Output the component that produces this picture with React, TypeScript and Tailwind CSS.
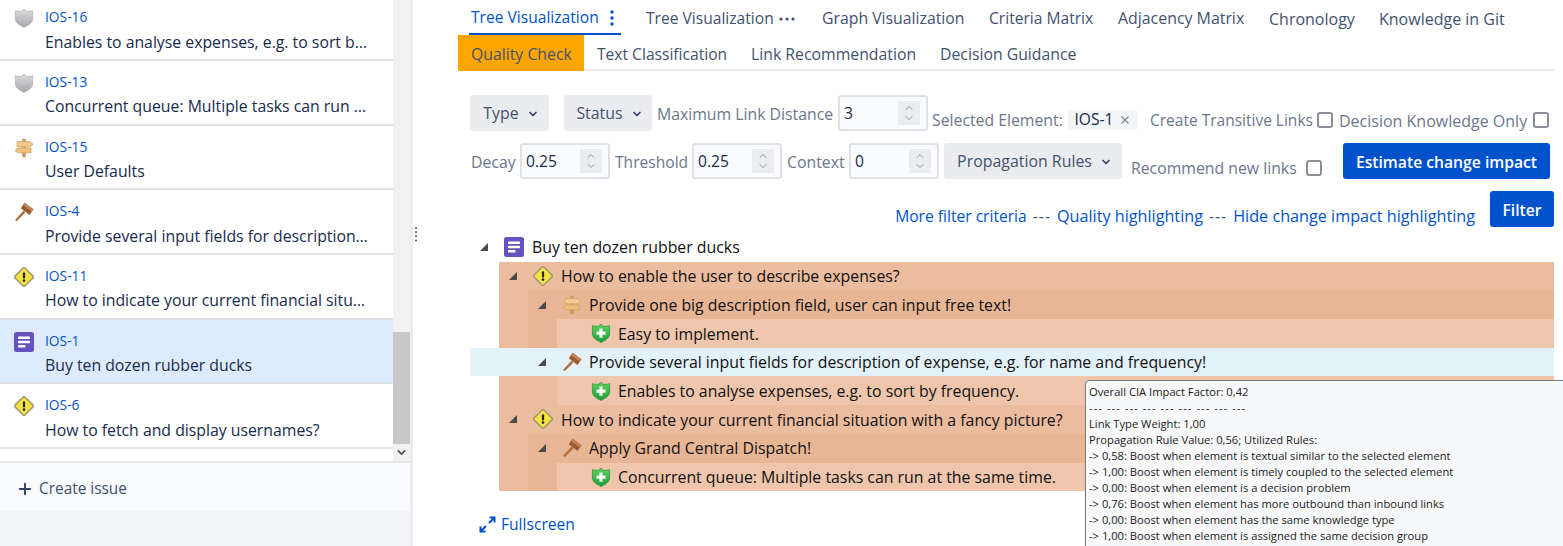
import { ChevronDown, ChevronUp, Plus, X } from "lucide-react";
import type { ReactNode } from "react";

type IconKind = "story" | "warning" | "shieldGray" | "shieldGreen" | "sign" | "gavel";

function StoryIcon() {
  return (
    <svg width="20" height="20" viewBox="0 0 20 20">
      <rect width="20" height="20" rx="2.5" fill="#6554c0" />
      <rect x="4" y="4.5" width="12" height="2.5" rx="0.8" fill="#fff" />
      <rect x="4" y="8.8" width="12" height="2.5" rx="0.8" fill="#fff" />
      <rect x="4" y="13" width="7.5" height="2.5" rx="0.8" fill="#fff" />
    </svg>
  );
}

function WarningIcon() {
  return (
    <svg width="20" height="20" viewBox="0 0 20 20">
      <rect x="3" y="3" width="14" height="14" rx="1.6" transform="rotate(45 10 10)" fill="#f4e43f" stroke="#a39b78" strokeWidth="1.6" />
      <rect x="8.9" y="5.2" width="2.2" height="6.2" rx="1" fill="#26261c" />
      <circle cx="10" cy="13.6" r="1.3" fill="#26261c" />
    </svg>
  );
}

const shieldPath = "M10 1.2 L12.6 3.4 L16.6 3.2 L18.6 2.6 V11 C18.6 15 14 17.5 10 19.4 C6 17.5 1.4 15 1.4 11 V2.6 L3.4 3.2 L7.4 3.4 Z";

function ShieldIcon({ green }: { green?: boolean }) {
  const id = green ? "shield-green" : "shield-gray";
  return (
    <svg width="20" height="20" viewBox="0 0 20 20">
      <defs>
        <linearGradient id={id} x1="0" y1="0" x2="0" y2="1">
          <stop offset="0" stopColor={green ? "#5fd35f" : "#dcdcde"} />
          <stop offset="1" stopColor={green ? "#1f9a36" : "#a6a7ab"} />
        </linearGradient>
      </defs>
      <path d={shieldPath} fill={`url(#${id})`} stroke={green ? "#2c9a3e" : "#b4b5b9"} strokeWidth="0.8" />
      {green && <path d="M8.4 5.6 h3.2 v3 h3 v3.2 h-3 v3 h-3.2 v-3 h-3 v-3.2 h3 Z" fill="#eefaf0" />}
    </svg>
  );
}

function SignIcon() {
  return (
    <svg width="20" height="20" viewBox="0 0 20 20">
      <rect x="8.2" y="0.8" width="3.6" height="18.4" rx="0.6" fill="#c99a5e" />
      <path d="M3 3.6 H16 L19 6.2 L16 8.8 H3 Z" fill="#f3c98e" stroke="#cf9d5f" strokeWidth="0.7" />
      <path d="M17 10 H4 L1 12.4 L4 14.8 H17 Z" fill="#efbd7c" stroke="#cf9d5f" strokeWidth="0.7" />
    </svg>
  );
}

function GavelIcon() {
  return (
    <svg width="20" height="20" viewBox="0 0 20 20">
      <path d="M1.6 17.2 L9.6 8.6 L11.4 10.4 L3.2 18.8 C2.4 19.4 1 18.2 1.6 17.2 Z" fill="#b06f43" />
      <path d="M10.5 0.8 L19.5 7.2 L15.5 13 L6.8 6.2 Z" fill="#9c5a30" />
      <path d="M10.5 0.8 L19.5 7.2 L17.8 9.4 L9 3 Z" fill="#c5855a" />
    </svg>
  );
}

function NodeIcon({ kind }: { kind: IconKind }) {
  if (kind === "story") return <StoryIcon />;
  if (kind === "warning") return <WarningIcon />;
  if (kind === "shieldGray") return <ShieldIcon />;
  if (kind === "shieldGreen") return <ShieldIcon green />;
  if (kind === "sign") return <SignIcon />;
  return <GavelIcon />;
}

const issues: { id: string; title: string; icon: IconKind; selected?: boolean }[] = [
  { id: "IOS-16", title: "Enables to analyse expenses, e.g. to sort by frequency.", icon: "shieldGray" },
  { id: "IOS-13", title: "Concurrent queue: Multiple tasks can run at the same time.", icon: "shieldGray" },
  { id: "IOS-15", title: "User Defaults", icon: "sign" },
  { id: "IOS-4", title: "Provide several input fields for description of expense.", icon: "gavel" },
  { id: "IOS-11", title: "How to indicate your current financial situation with a picture?", icon: "warning" },
  { id: "IOS-1", title: "Buy ten dozen rubber ducks", icon: "story", selected: true },
  { id: "IOS-6", title: "How to fetch and display usernames?", icon: "warning" },
];

function IssueRow({ id, title, icon, selected }: (typeof issues)[number]) {
  return (
    <div className={`flex h-[64.67px] shrink-0 border-b-2 border-[#dfe1e6] pl-[14px] pt-[12px] ${selected ? "bg-[#deebff]" : "bg-white"}`}>
      <div className="w-[31px] shrink-0">
        <NodeIcon kind={icon} />
      </div>
      <div className="min-w-0 w-[325px]">
        <div className="text-[13.8px] leading-[18px] text-[#0052cc]">{id}</div>
        <div className="mt-[5.3px] truncate text-[15.8px] leading-[20px] text-[#172b4d]">{title}</div>
      </div>
    </div>
  );
}

function Sidebar() {
  return (
    <aside className="flex h-full w-[413px] shrink-0 flex-col border-r-[3px] border-[#ebecf0] bg-[#f4f5f7]">
      <div className="flex h-[461px] shrink-0 overflow-hidden">
        <div className="w-[393px] shrink-0 bg-white">
          <div className="-mt-[3.7px] flex flex-col">
            {issues.map((issue) => (
              <IssueRow key={issue.id} {...issue} />
            ))}
          </div>
        </div>
        <div className="flex w-[17px] shrink-0 flex-col bg-[#f1f1f1] pt-[332px]">
          <div className="h-[112px] bg-[#c8c8c8]" />
          <ChevronDown size={13} strokeWidth={3} className="ml-[2px] mt-[2px] text-[#505050]" />
        </div>
      </div>
      <div className="flex h-[50px] items-center gap-[5px] border-t-2 border-[#e4e6ea] bg-[#fafbfc] pl-[16px] pt-[3px] text-[15.4px] text-[#42526e]">
        <Plus size={18} strokeWidth={2.6} className="text-[#344563]" />
        Create issue
      </div>
    </aside>
  );
}

function TabItem({ children, className, highlight }: { children: ReactNode; className: string; highlight?: boolean }) {
  return (
    <div className={`flex h-[36px] shrink-0 items-center whitespace-nowrap text-[#42526e] ${className} ${highlight ? "bg-[#ffa500]" : ""}`}>
      {children}
    </div>
  );
}

function Tabs() {
  return (
    <div className="border-b-2 border-[#ebecf0]">
      <div className="flex h-[35px]">
        <div className="ml-[11px] flex h-[35px] w-[152px] items-center justify-between border-b-[2.5px] border-[#0052cc] pl-[2px] pr-[7px] pt-[3px] text-[15.6px] text-[#0052cc]">
          Tree Visualization
          <svg width="4" height="16" viewBox="0 0 4 16">
            <circle cx="2" cy="2" r="1.7" fill="#0052cc" />
            <circle cx="2" cy="8" r="1.7" fill="#0052cc" />
            <circle cx="2" cy="14" r="1.7" fill="#0052cc" />
          </svg>
        </div>
        <TabItem className="ml-[25px] w-[176px] pt-[1px] text-[15.6px]">
          Tree Visualization
          <svg width="16" height="4" viewBox="0 0 16 4" className="ml-[5px]">
            <circle cx="2" cy="2" r="1.6" fill="#42526e" />
            <circle cx="8" cy="2" r="1.6" fill="#42526e" />
            <circle cx="14" cy="2" r="1.6" fill="#42526e" />
          </svg>
        </TabItem>
        <TabItem className="w-[167px] pt-[1px] text-[15.8px]">Graph Visualization</TabItem>
        <TabItem className="w-[129px] pt-[1px] text-[15.6px]">Criteria Matrix</TabItem>
        <TabItem className="w-[151px] pt-[1px] text-[15.9px]">Adjacency Matrix</TabItem>
        <TabItem className="w-[110px] pt-[1px] text-[16px]">Chronology</TabItem>
        <TabItem className="w-[127px] pt-[1px] text-[16px]">Knowledge in Git</TabItem>
      </div>
      <div className="flex h-[34px]">
        <TabItem className="w-[126px] pl-[13px] pt-[3px] text-[15.8px]" highlight>Quality Check</TabItem>
        <TabItem className="ml-[13px] w-[154px] pt-[3px] text-[15.6px]">Text Classification</TabItem>
        <TabItem className="w-[189px] pt-[3px] text-[15.8px]">Link Recommendation</TabItem>
        <TabItem className="w-[137px] pt-[3px] text-[15.8px]">Decision Guidance</TabItem>
      </div>
    </div>
  );
}

function Dropdown({ label, className }: { label: string; className: string }) {
  return (
    <div className={`flex h-[36px] items-center justify-center gap-[8px] rounded-[3px] bg-[#ebecf0] pl-[3px] pt-[2px] text-[15.9px] text-[#42526e] ${className}`}>
      {label}
      <ChevronDown size={12} strokeWidth={3.4} className="text-[#344563]" />
    </div>
  );
}

function NumberField({ value }: { value: string }) {
  return (
    <div className="flex h-[36px] w-[90px] items-center justify-between rounded-[3px] border-2 border-[#dfe1e6] bg-[#fafbfc] pl-[4px] pr-[6px]">
      <input readOnly value={value} className="w-[50px] bg-transparent pt-[2px] text-[15.6px] text-[#172b4d] outline-none" />
      <span className="flex h-[24px] w-[22px] flex-col items-center justify-center bg-[#ebecf0] text-[#7a7f8a]">
        <ChevronUp size={12} strokeWidth={1.6} className="-mb-[1px]" />
        <ChevronDown size={12} strokeWidth={1.6} className="-mt-[1px]" />
      </span>
    </div>
  );
}

function Label({ children, className }: { children: ReactNode; className: string }) {
  return <span className={`shrink-0 whitespace-nowrap text-[#6b778c] ${className}`}>{children}</span>;
}

function Box({ className = "" }: { className?: string }) {
  return <span className={`h-[16px] w-[16px] shrink-0 rounded-[3px] border-2 border-[#8b8d99] bg-white ${className}`} />;
}

function Filters() {
  return (
    <div className="pl-[12px]">
      <div className="mt-[24px] flex h-[36px] items-start">
        <Dropdown label="Type" className="w-[79px]" />
        <Dropdown label="Status" className="ml-[15px] w-[88px]" />
        <Label className="ml-[5px] mt-[8px] w-[176px] text-[15.8px]">Maximum Link Distance</Label>
        <div className="ml-[5px]">
          <NumberField value="3" />
        </div>
        <Label className="ml-[4px] mt-[14px] w-[131px] text-[15.8px]">Selected Element:</Label>
        <div className="ml-[5px] mt-[15px] flex h-[20px] w-[70px] items-center justify-center gap-[6px] rounded-[3px] bg-[#f4f5f7] text-[15.6px] text-[#172b4d]">
          IOS-1
          <X size={12} strokeWidth={2.4} className="text-[#7a869a]" />
        </div>
        <Label className="ml-[12px] mt-[14px] w-[163px] text-[15.5px]">Create Transitive Links</Label>
        <Box className="ml-[4px] mt-[17px]" />
        <Label className="ml-[6px] mt-[13.5px] w-[189px] text-[16px]">Decision Knowledge Only</Label>
        <Box className="ml-[5px] mt-[17px]" />
      </div>
      <div className="mt-[12px] flex h-[36px] items-start">
        <Label className="ml-[1px] mt-[8px] w-[44px] text-[15.8px]">Decay</Label>
        <div className="ml-[5px]">
          <NumberField value="0.25" />
        </div>
        <Label className="ml-[5px] mt-[8px] w-[73px] text-[15.6px]">Threshold</Label>
        <div className="ml-[4px]">
          <NumberField value="0.25" />
        </div>
        <Label className="ml-[5px] mt-[8px] w-[58px] text-[15.8px]">Context</Label>
        <div className="ml-[4px]">
          <NumberField value="0" />
        </div>
        <Dropdown label="Propagation Rules" className="ml-[5px] w-[178px]" />
        <Label className="ml-[9px] mt-[14px] w-[166px] text-[15.8px]">Recommend new links</Label>
        <Box className="ml-[9px] mt-[17px]" />
        <button className="ml-[21px] h-[36px] w-[207px] rounded-[3px] bg-[#0052cc] pt-[3px] text-[15.7px] font-semibold text-white">
          Estimate change impact
        </button>
      </div>
      <div className="mt-[12px] flex h-[36px] items-start justify-end">
        <div className="mt-[13px] flex gap-[6px] leading-[24px]">
          <span className="text-[15.6px] text-[#0052cc]">More filter criteria</span>
          <span className="text-[15.8px] tracking-[1px] text-[#42526e]">---</span>
          <span className="text-[16.2px] text-[#0052cc]">Quality highlighting</span>
          <span className="text-[15.8px] tracking-[1px] text-[#42526e]">---</span>
          <span className="text-[16.2px] text-[#0052cc]">Hide change impact highlighting</span>
        </div>
        <button className="ml-[15px] h-[36px] w-[64px] rounded-[3px] bg-[#0052cc] pt-[3px] text-[15.6px] font-semibold text-white">Filter</button>
      </div>
    </div>
  );
}

function Arrow() {
  return (
    <svg width="10" height="10" viewBox="0 0 10 10">
      <path d="M9 1 V9 H1 Z" fill="#4a4a4a" />
    </svg>
  );
}

function TreeRow({ icon, text, leaf, tight }: { icon: IconKind; text: string; leaf?: boolean; tight?: boolean }) {
  return (
    <div className="flex h-[28.7px] items-center text-[15.85px] text-[#111]">
      <span className="flex w-[34px] shrink-0 pl-[9px]">{!leaf && <Arrow />}</span>
      <span className={`flex shrink-0 ${tight ? "w-[27px]" : "w-[28px]"}`}>
        <NodeIcon kind={icon} />
      </span>
      <span className="whitespace-nowrap pt-[2px]">{text}</span>
    </div>
  );
}

function Tree() {
  return (
    <div className="ml-[12px] mt-[6px]">
      <TreeRow icon="story" text="Buy ten dozen rubber ducks" />
      <div className="ml-[29px] bg-[#ecbc9f]">
        <TreeRow icon="warning" text="How to enable the user to describe expenses?" />
        <div className="ml-[29px] bg-[#e9b695]">
          <TreeRow tight icon="sign" text="Provide one big description field, user can input free text!" />
          <div className="ml-[29px] bg-[#efc6ac]">
            <TreeRow tight leaf icon="shieldGreen" text="Easy to implement." />
          </div>
        </div>
        <div className="-ml-[29px] bg-[#e3f1f9] pl-[58px]">
          <TreeRow tight icon="gavel" text="Provide several input fields for description of expense, e.g. for name and frequency!" />
        </div>
        <div className="ml-[58px] bg-[#efc6ac]">
          <TreeRow tight leaf icon="shieldGreen" text="Enables to analyse expenses, e.g. to sort by frequency." />
        </div>
        <TreeRow icon="warning" text="How to indicate your current financial situation with a fancy picture?" />
        <div className="ml-[29px] bg-[#e9b695]">
          <TreeRow tight icon="gavel" text="Apply Grand Central Dispatch!" />
          <div className="ml-[29px] bg-[#efc6ac]">
            <TreeRow tight leaf icon="shieldGreen" text="Concurrent queue: Multiple tasks can run at the same time." />
          </div>
        </div>
      </div>
      <div className="ml-[9px] mt-[21px] flex items-center gap-[5px] text-[15.6px] leading-[24px] text-[#0052cc]">
        <svg width="17" height="17" viewBox="0 0 17 17" fill="none" stroke="#0052cc" strokeWidth="2">
          <path d="M10.5 1.5 H15.5 V6.5 M15.5 1.5 L10 7" />
          <path d="M6.5 15.5 H1.5 V10.5 M1.5 15.5 L7 10" />
        </svg>
        Fullscreen
      </div>
    </div>
  );
}

const tooltipLines = [
  "Link Type Weight: 1,00",
  "Propagation Rule Value: 0,56; Utilized Rules:",
  "-> 0,58: Boost when element is textual similar to the selected element",
  "-> 1,00: Boost when element is timely coupled to the selected element",
  "-> 0,00: Boost when element is a decision problem",
  "-> 0,76: Boost when element has more outbound than inbound links",
  "-> 0,00: Boost when element has the same knowledge type",
  "-> 1,00: Boost when element is assigned the same decision group",
];

function Tooltip() {
  return (
    <div className="absolute left-[1085px] top-[380px] h-[180px] w-[490px] rounded-[4px] border border-[#767676] bg-[#f8f9fa] pl-[3px] pt-[3px] text-[11.2px] leading-[16px] text-[#1a1a1a]">
      <div>Overall CIA Impact Factor: 0,42</div>
      <div className="tracking-[1.05px]">--- --- --- --- --- --- --- --- ---</div>
      {tooltipLines.map((line) => (
        <div key={line}>{line}</div>
      ))}
    </div>
  );
}

export default function App() {
  return (
    <div className="relative flex h-[546px] w-[1563px] overflow-hidden bg-white font-['Open_Sans',sans-serif]">
      <Sidebar />
      <div className="w-[45px] shrink-0 pt-[226px] pl-[1px]">
        <svg width="4" height="17" viewBox="0 0 4 17">
          <circle cx="2" cy="2" r="1" fill="#42526e" />
          <circle cx="2" cy="6" r="1" fill="#42526e" />
          <circle cx="2" cy="10" r="1" fill="#42526e" />
          <circle cx="2" cy="14.5" r="1" fill="#42526e" />
        </svg>
      </div>
      <main className="w-[1096px] shrink-0">
        <Tabs />
        <Filters />
        <Tree />
      </main>
      <Tooltip />
    </div>
  );
}
